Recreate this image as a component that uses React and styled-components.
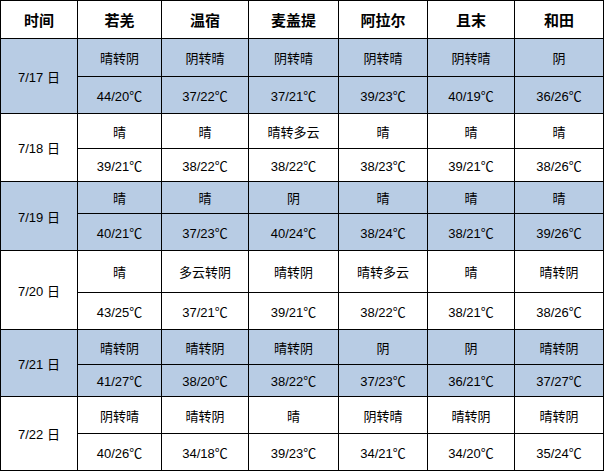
import React from "react";
import styled, { createGlobalStyle } from "styled-components";

const Global = createGlobalStyle`
  html, body { margin: 0; padding: 0; background: #ffffff; }
  body { font-family: "Liberation Sans", "Noto Sans CJK SC", sans-serif; }
`;

const Grid = styled.div`
  display: grid;
  grid-template-columns: 76px 83px 86px 89px 88px 86px 88px;
  grid-template-rows: 37px 37px 36px 34px 32px 31px 36px 41px 36px 34px 31px 36px 36px;
  gap: 1px;
  padding: 1px;
  background: #000;
  width: max-content;
`;

const Head = styled.div`
  background: #fff;
  display: flex;
  align-items: center;
  justify-content: center;
  font-family: "Noto Sans CJK SC", sans-serif;
  font-weight: 700;
  font-size: 15px;
  color: #000;
`;

const Cell = styled.div`
  background: ${(p) => (p.$blue ? "#b8cce4" : "#ffffff")};
  display: flex;
  align-items: center;
  justify-content: center;
  font-size: 13px;
  color: #000;
  white-space: nowrap;
`;

const DateCell = styled(Cell)`
  grid-row: span 2;
`;

const cities = ["若羌", "温宿", "麦盖提", "阿拉尔", "且末", "和田"];

const data = [
  {
    date: "7/17 日",
    w: ["晴转阴", "阴转晴", "阴转晴", "阴转晴", "阴转晴", "阴"],
    t: ["44/20℃", "37/22℃", "37/21℃", "39/23℃", "40/19℃", "36/26℃"],
  },
  {
    date: "7/18 日",
    w: ["晴", "晴", "晴转多云", "晴", "晴", "晴"],
    t: ["39/21℃", "38/22℃", "38/22℃", "38/23℃", "39/21℃", "38/26℃"],
  },
  {
    date: "7/19 日",
    w: ["晴", "晴", "阴", "晴", "晴", "晴"],
    t: ["40/21℃", "37/23℃", "40/24℃", "38/24℃", "38/21℃", "39/26℃"],
  },
  {
    date: "7/20 日",
    w: ["晴", "多云转阴", "晴转阴", "晴转多云", "晴", "晴转阴"],
    t: ["43/25℃", "37/21℃", "39/21℃", "38/22℃", "38/21℃", "38/26℃"],
  },
  {
    date: "7/21 日",
    w: ["晴转阴", "晴转阴", "晴转阴", "阴", "阴", "晴转阴"],
    t: ["41/27℃", "38/20℃", "38/22℃", "37/23℃", "36/21℃", "37/27℃"],
  },
  {
    date: "7/22 日",
    w: ["阴转晴", "晴转阴", "晴", "阴转晴", "晴转阴", "晴转阴"],
    t: ["40/26℃", "34/18℃", "39/23℃", "34/21℃", "34/20℃", "35/24℃"],
  },
];

export default function App() {
  return (
    <>
      <Global />
      <Grid>
        <Head>时间</Head>
        {cities.map((c) => (
          <Head key={c}>{c}</Head>
        ))}
        {data.map((g, i) => {
          const blue = i % 2 === 0;
          return (
            <React.Fragment key={g.date}>
              <DateCell $blue={blue}>{g.date}</DateCell>
              {g.w.map((w, j) => (
                <Cell key={"w" + j} $blue={blue}>{w}</Cell>
              ))}
              {g.t.map((t, j) => (
                <Cell key={"t" + j} $blue={blue}>{t}</Cell>
              ))}
            </React.Fragment>
          );
        })}
      </Grid>
    </>
  );
}
